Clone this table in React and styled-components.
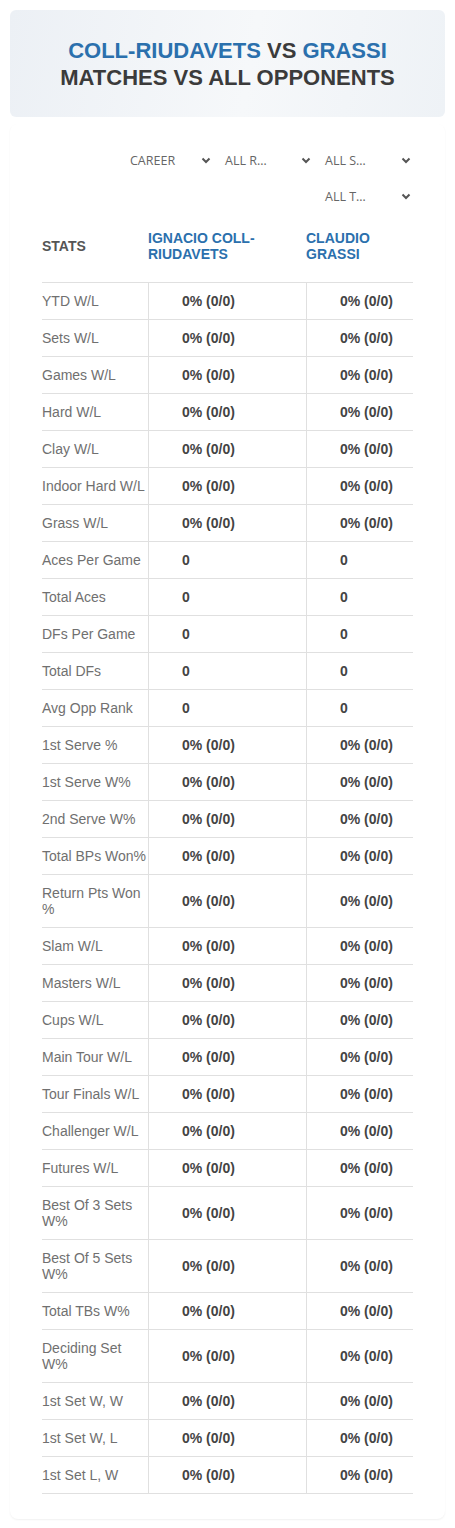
import React from "react";
import styled, { createGlobalStyle } from "styled-components";

const GlobalStyle = createGlobalStyle`
  body {
    margin: 0;
    background: #ffffff;
    font-family: "Liberation Sans", Arial, sans-serif;
  }
`;

const Page = styled.div`
  width: 455px;
  padding: 10px 10px 10px;
  box-sizing: border-box;
`;

const Banner = styled.div`
  height: 107px;
  border-radius: 6px;
  background: linear-gradient(100deg, #ecf0f5 0%, #f6f8fa 55%, #eef2f6 100%);
  display: flex;
  flex-direction: column;
  align-items: center;
  justify-content: center;
  text-align: center;
`;

const Title = styled.h1`
  margin: 0;
  font-size: 22px;
  line-height: 27px;
  font-weight: 700;
  color: #3b3b3b;
  text-transform: uppercase;
`;

const Name = styled.span`
  color: #2b70ad;
`;

const Card = styled.div`
  margin-top: 7px;
  padding: 18px 32px 25px;
  background: #fff;
  border-radius: 8px;
  box-shadow: 0 1px 2px rgba(0, 0, 0, 0.06);
`;

const Filters = styled.div`
  display: flex;
  flex-wrap: wrap;
  justify-content: flex-end;
  column-gap: 12px;
  margin-left: auto;
  width: 300px;
`;

const Select = styled.div`
  width: ${(p) => p.$w || 88}px;
  height: 36px;
  display: flex;
  align-items: center;
  justify-content: space-between;
  padding-right: 2px;
  box-sizing: border-box;
  font-family: "Open Sans", "Noto Sans", sans-serif;
  font-size: 12.5px;
  color: #666;
  text-transform: uppercase;
`;

const Table = styled.div`
  margin-top: 8px;
  display: grid;
  grid-template-columns: 106px 158px 107px;
`;

const HeadCell = styled.div`
  height: 61px;
  box-sizing: border-box;
  padding-bottom: 13px;
  display: flex;
  align-items: center;
  font-size: 14px;
  line-height: 16px;
  font-weight: 700;
  text-transform: uppercase;
  color: ${(p) => (p.$player ? "#2b70ad" : "#555")};
  border-bottom: 1px solid #e0e0e0;
`;

const Label = styled.div`
  padding: 10px 0 10px;
  font-size: 14px;
  line-height: 16px;
  color: #707070;
  border-bottom: 1px solid #e0e0e0;
  display: flex;
  align-items: center;
`;

const Value = styled.div`
  padding: 10px 0 10px 33px;
  font-size: 14px;
  line-height: 16px;
  font-weight: 700;
  color: #444;
  border-bottom: 1px solid #e0e0e0;
  border-left: 1px solid #e0e0e0;
  display: flex;
  align-items: center;
`;

const Chevron = () => (
  <svg width="10" height="7" viewBox="0 0 10 7">
    <path d="M1.5 1.5 L5 5 L8.5 1.5" fill="none" stroke="#555" strokeWidth="2" />
  </svg>
);

const pct = "0% (0/0)";
const rows = [
  ["YTD W/L", pct],
  ["Sets W/L", pct],
  ["Games W/L", pct],
  ["Hard W/L", pct],
  ["Clay W/L", pct],
  ["Indoor Hard W/L", pct],
  ["Grass W/L", pct],
  ["Aces Per Game", "0"],
  ["Total Aces", "0"],
  ["DFs Per Game", "0"],
  ["Total DFs", "0"],
  ["Avg Opp Rank", "0"],
  ["1st Serve %", pct],
  ["1st Serve W%", pct],
  ["2nd Serve W%", pct],
  ["Total BPs Won%", pct],
  ["Return Pts Won %", pct],
  ["Slam W/L", pct],
  ["Masters W/L", pct],
  ["Cups W/L", pct],
  ["Main Tour W/L", pct],
  ["Tour Finals W/L", pct],
  ["Challenger W/L", pct],
  ["Futures W/L", pct],
  ["Best Of 3 Sets W%", pct],
  ["Best Of 5 Sets W%", pct],
  ["Total TBs W%", pct],
  ["Deciding Set W%", pct],
  ["1st Set W, W", pct],
  ["1st Set W, L", pct],
  ["1st Set L, W", pct],
];

const filters = [
  ["Career", 83],
  ["All R…", 88],
  ["All S…", 88],
  ["All T…", 88],
];

export default function App() {
  return (
    <Page>
      <GlobalStyle />
      <Banner>
        <Title>
          <Name>Coll-Riudavets</Name> vs <Name>Grassi</Name>
        </Title>
        <Title>Matches vs All Opponents</Title>
      </Banner>
      <Card>
        <Filters>
          {filters.map(([t, w]) => (
            <Select key={t} $w={w}>
              <span>{t}</span>
              <Chevron />
            </Select>
          ))}
        </Filters>
        <Table>
          <HeadCell>Stats</HeadCell>
          <HeadCell $player>Ignacio Coll-Riudavets</HeadCell>
          <HeadCell $player>Claudio Grassi</HeadCell>
          {rows.map(([label, v]) => (
            <React.Fragment key={label}>
              <Label>{label}</Label>
              <Value>{v}</Value>
              <Value>{v}</Value>
            </React.Fragment>
          ))}
        </Table>
      </Card>
    </Page>
  );
}
